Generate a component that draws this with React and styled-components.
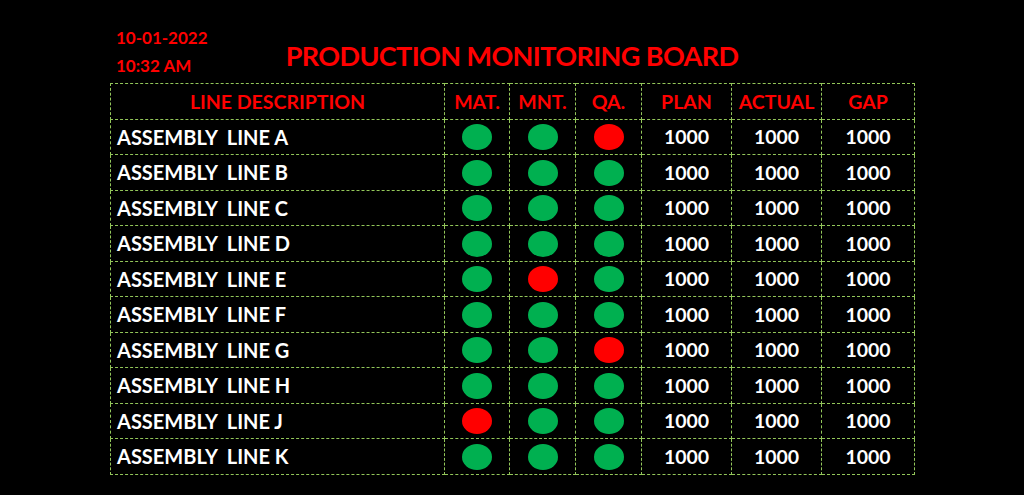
import styled, { createGlobalStyle } from "styled-components";

const GlobalStyle = createGlobalStyle`
  html, body {
    margin: 0;
    padding: 0;
    background: #000;
  }
  body {
    font-family: Lato, "Open Sans", sans-serif;
  }
`;

const Board = styled.div`
  width: 804px;
  margin: 0 auto;
  padding-top: 24px;
`;

const Header = styled.div`
  display: grid;
  grid-template-columns: 1fr auto 1fr;
  height: 59px;
`;

const Stamp = styled.div`
  padding-left: 6px;
  color: #ff0000;
  font-weight: 700;
  font-size: 17px;
  line-height: 28px;
`;

const Title = styled.h1`
  margin: 0;
  padding-top: 17px;
  color: #ff0000;
  font-size: 27px;
  letter-spacing: -0.6px;
  font-weight: 700;
  line-height: 30px;
`;

const Table = styled.table`
  width: 804px;
  table-layout: fixed;
  border-collapse: collapse;
  td,
  th {
    border: 1px dashed #93c65a;
    padding: 0;
    height: 34.5px;
    font-weight: 700;
    font-size: 19.5px;
    text-align: center;
    vertical-align: middle;
  }
  th {
    color: #ff0000;
  }
  td {
    color: #fff;
  }
`;

const Label = styled.td`
  && {
    text-align: left;
    padding-left: 6px;
    font-size: 20px;
  }
`;

const Lamp = styled.span`
  display: inline-block;
  vertical-align: middle;
  width: 30px;
  height: 26px;
  border-radius: 50%;
  background: ${(p) => (p.$fault ? "#ff0000" : "#00b050")};
`;

const widths = [334, 65, 66, 66, 90, 90, 93];
const heads = ["LINE DESCRIPTION", "MAT.", "MNT.", "QA.", "PLAN", "ACTUAL", "GAP"];

const lines = [
  { id: "A", mat: 0, mnt: 0, qa: 1 },
  { id: "B", mat: 0, mnt: 0, qa: 0 },
  { id: "C", mat: 0, mnt: 0, qa: 0 },
  { id: "D", mat: 0, mnt: 0, qa: 0 },
  { id: "E", mat: 0, mnt: 1, qa: 0 },
  { id: "F", mat: 0, mnt: 0, qa: 0 },
  { id: "G", mat: 0, mnt: 0, qa: 1 },
  { id: "H", mat: 0, mnt: 0, qa: 0 },
  { id: "J", mat: 1, mnt: 0, qa: 0 },
  { id: "K", mat: 0, mnt: 0, qa: 0 },
];

export default function App() {
  return (
    <>
      <GlobalStyle />
      <Board>
        <Header>
          <Stamp>
            <div>10-01-2022</div>
            <div>10:32 AM</div>
          </Stamp>
          <Title>PRODUCTION MONITORING BOARD</Title>
          <div />
        </Header>
        <Table>
          <colgroup>
            {widths.map((w, i) => (
              <col key={i} style={{ width: w }} />
            ))}
          </colgroup>
          <thead>
            <tr>
              {heads.map((h) => (
                <th key={h}>{h}</th>
              ))}
            </tr>
          </thead>
          <tbody>
            {lines.map((l) => (
              <tr key={l.id}>
                <Label>ASSEMBLY&nbsp; LINE {l.id}</Label>
                <td>
                  <Lamp $fault={l.mat} />
                </td>
                <td>
                  <Lamp $fault={l.mnt} />
                </td>
                <td>
                  <Lamp $fault={l.qa} />
                </td>
                <td>1000</td>
                <td>1000</td>
                <td>1000</td>
              </tr>
            ))}
          </tbody>
        </Table>
      </Board>
    </>
  );
}
